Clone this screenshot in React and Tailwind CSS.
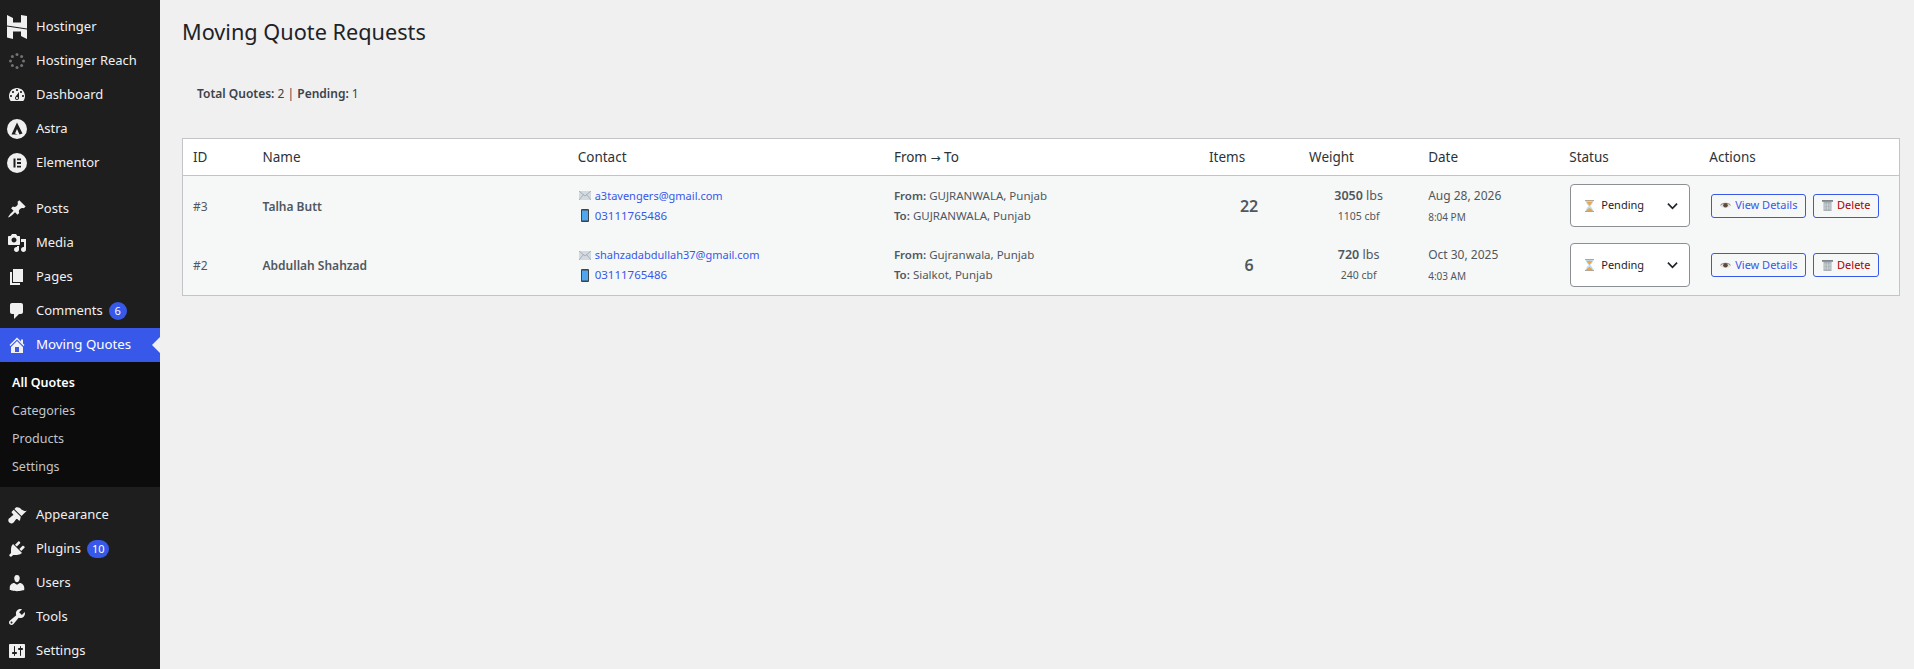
import React from "react";

const FONT = { fontFamily: '"Noto Sans", sans-serif' };

const dash = {
  dashboard:
    "M3.76 16h12.48c1.1-1.37 1.76-3.11 1.76-5 0-4.42-3.58-8-8-8s-8 3.58-8 8c0 1.89.66 3.63 1.76 5zM10 4c.55 0 1 .45 1 1s-.45 1-1 1-1-.45-1-1 .45-1 1-1zM6 6c.55 0 1 .45 1 1s-.45 1-1 1-1-.45-1-1 .45-1 1-1zm8 0c.55 0 1 .45 1 1s-.45 1-1 1-1-.45-1-1 .45-1 1-1zm-5.37 5.55L12 7v6c0 1.1-.9 2-2 2s-2-.9-2-2c0-.57.24-1.08.63-1.45zM4 10c.55 0 1 .45 1 1s-.45 1-1 1-1-.45-1-1 .45-1 1-1zm12 0c.55 0 1 .45 1 1s-.45 1-1 1-1-.45-1-1 .45-1 1-1zm-5 3c0-.55-.45-1-1-1s-1 .45-1 1 .45 1 1 1 1-.45 1-1z",
  post: "M10.44 3.02l1.82-1.82 6.36 6.35-1.83 1.82c-1.05-.68-2.48-.57-3.41.36l-.75.75c-.92.93-1.04 2.35-.35 3.41l-1.83 1.82-2.41-2.41-2.8 2.79c-.42.42-3.38 2.71-3.8 2.29s1.86-3.39 2.28-3.81l2.79-2.79L4.1 9.36l1.83-1.82c1.05.69 2.48.57 3.4-.36l.75-.75c.93-.92 1.05-2.35.36-3.41z",
  media:
    "M13 11V4c0-.55-.45-1-1-1h-1.67L9 1H5L3.67 3H2c-.55 0-1 .45-1 1v7c0 .55.45 1 1 1h10c.55 0 1-.45 1-1zM7 4.5c1.38 0 2.5 1.12 2.5 2.5S8.38 9.5 7 9.5 4.5 8.38 4.5 7 5.62 4.5 7 4.5zM14 6h5v10.5c0 1.38-1.12 2.5-2.5 2.5S14 17.88 14 16.5s1.12-2.5 2.5-2.5c.17 0 .34.02.5.05V9h-3V6zm-4 8.05V13h2v3.5c0 1.38-1.12 2.5-2.5 2.5S7 17.88 7 16.5 8.12 14 9.5 14c.17 0 .34.02.5.05z",
  page: "M6 15V2h10v13H6zm-1 1h8v2H3V5h2v11z",
  comments:
    "M5 2h9c1.1 0 2 .9 2 2v7c0 1.1-.9 2-2 2h-2l-5 5v-5H5c-1.1 0-2-.9-2-2V4c0-1.1.9-2 2-2z",
  home: "M16 8.5l1.53 1.53-1.06 1.06L10 4.62l-6.47 6.47-1.06-1.06L10 2.5l4 4v-2h2v4zm-6-2.46l6 5.99V18H4v-5.97zM12 17v-5H8v5h4z",
  appearance:
    "M14.48 11.06L7.41 3.99l1.5-1.5c.5-.56 2.3-.47 3.51.32 1.21.8 1.43 1.28 2.91 2.1 1.18.64 2.45 1.26 4.45.85zm-.71.71L6.7 4.7 4.93 6.47c-.39.39-.39 1.02 0 1.41l1.06 1.06c.39.39.39 1.03 0 1.42-.6.6-1.43 1.11-2.21 1.69-.35.26-.7.53-1.01.84C1.43 13.23.78 15.24 1.82 17s3.46 1.8 4.77.5c.31-.31.58-.66.84-1.01.58-.78 1.09-1.61 1.69-2.21.39-.39 1.02-.39 1.41 0l1.06 1.06c.39.39 1.02.39 1.41 0z",
  plugins:
    "M13.11 4.36L9.87 7.6 8 5.73l3.24-3.24c.35-.34 1.05-.2 1.56.32.52.51.66 1.21.31 1.55zm-8 1.77l.91-1.12 9.01 9.01-1.19.84c-.71.71-2.63 1.16-3.82 1.16H6.14L4.9 17.26c-.59.59-1.54.59-2.12 0-.59-.58-.59-1.53 0-2.12l1.24-1.24v-3.88c0-1.13.4-3.19 1.09-3.89zm7.26 3.97l3.24-3.24c.34-.35 1.04-.21 1.55.31.52.51.66 1.21.31 1.55l-3.24 3.25z",
  users:
    "M10 9.25c-2.27 0-2.73-3.44-2.73-3.44C7 4.02 7.82 2 9.97 2c2.16 0 2.98 2.02 2.71 3.81 0 0-.41 3.44-2.68 3.44zm0 2.57L12.72 10c2.39 0 4.52 2.33 4.52 4.53v2.49s-3.65 1.13-7.24 1.13c-3.65 0-7.24-1.13-7.24-1.13v-2.49c0-2.25 1.94-4.48 4.47-4.48z",
  tools:
    "M16.68 9.77c-1.34 1.34-3.3 1.67-4.95.99l-5.41 6.52c-.99.99-2.59.99-3.58 0s-.99-2.59 0-3.57l6.52-5.42c-.68-1.65-.35-3.61.99-4.95 1.28-1.28 3.12-1.62 4.72-1.06l-2.89 2.89 2.82 2.82 2.86-2.87c.53 1.58.18 3.39-1.08 4.65zM3.81 16.21c.4.39 1.04.39 1.43 0 .4-.4.4-1.04 0-1.43-.39-.4-1.03-.4-1.43 0-.39.39-.39 1.03 0 1.43z",
  settings:
    "M18 16V4c0-.55-.45-1-1-1H3c-.55 0-1 .45-1 1v12c0 .55.45 1 1 1h14c.55 0 1-.45 1-1zM8 11h1c.55 0 1 .45 1 1s-.45 1-1 1H8v1.5c0 .28-.22.5-.5.5s-.5-.22-.5-.5V13H6c-.55 0-1-.45-1-1s.45-1 1-1h1V5.5c0-.28.22-.5.5-.5s.5.22.5.5V11zm5-2h-1c-.55 0-1-.45-1-1s.45-1 1-1h1V5.5c0-.28.22-.5.5-.5s.5.22.5.5V7h1c.55 0 1 .45 1 1s-.45 1-1 1h-1v5.5c0 .28-.22.5-.5.5s-.5-.22-.5-.5V9z",
};

const Dash = ({ name }) => (
  <svg viewBox="0 0 20 20" className="w-5 h-5 fill-[#f0f0f1]">
    <path d={dash[name]} />
  </svg>
);

const HostingerLogo = () => (
  <svg viewBox="0 0 20 24" className="w-5 h-6 shrink-0 fill-[#f0f0f1]">
    <path d="M0 0l6 3v4.500h8V0l6 1v12.500L0 10.500zM0 11.500l20 3V24l-6-3v-4.500H6V24l-6-1.500z" />
  </svg>
);

const ReachIcon = () => (
  <svg viewBox="0 0 20 20" className="w-5 h-5 fill-[#6f7276]">
    <circle cx="10" cy="3.500" r="1.500" />
    <circle cx="14.600" cy="5.400" r="1.500" />
    <circle cx="16.500" cy="10" r="1.500" />
    <circle cx="14.600" cy="14.600" r="1.500" />
    <circle cx="10" cy="16.500" r="1.500" />
    <circle cx="5.400" cy="14.600" r="1.500" />
    <circle cx="3.500" cy="10" r="1.500" />
    <circle cx="5.400" cy="5.400" r="1.500" />
  </svg>
);

const AstraIcon = () => (
  <svg viewBox="0 0 20 20" className="w-5 h-5">
    <circle cx="10" cy="10" r="10" fill="#f0f0f1" />
    <path d="M10 3.500l5.500 11-3 1-2.500-5.500-2 4.500 2.500 1H4.500z" fill="#1e1e1e" />
  </svg>
);

const ElementorIcon = () => (
  <svg viewBox="0 0 20 20" className="w-5 h-5">
    <circle cx="10" cy="10" r="10" fill="#f0f0f1" />
    <path d="M6.500 5.500h2v9h-2zM10 5.500h4v1.800h-4zM10 9.100h4v1.800h-4zM10 12.700h4v1.800h-4z" fill="#1e1e1e" />
  </svg>
);

const MailEmoji = () => (
  <svg viewBox="0 0 12 9" className="w-3 h-[9px] shrink-0">
    <rect width="12" height="9" fill="#d3dae0" />
    <path d="M0 0l6 5 6-5M0 9l4.500-5.500M12 9L7.500 3.500" fill="none" stroke="#9aa5ad" strokeWidth="0.8" />
  </svg>
);

const PhoneEmoji = () => (
  <svg viewBox="0 0 8 13" className="w-2 h-[13px] shrink-0">
    <rect width="8" height="13" rx="1" fill="#3e4347" />
    <rect x="1" y="1.500" width="6" height="10" fill="#4fa8ef" />
  </svg>
);

const Hourglass = () => (
  <svg viewBox="0 0 9 12" className="w-[9px] h-3 shrink-0">
    <path d="M1 1h7c0 3-2 4-2.800 5C6 7 8 8 8 11H1c0-3 2-4 2.800-5C3 5 1 4 1 1z" fill="#bfe0f2" />
    <path d="M1.500 2h6L4.500 6zM1.500 11c.5-2 2-2.500 3-3 1 .5 2.500 1 3 3z" fill="#efa64a" />
    <rect width="9" height="1.200" fill="#b3a58f" />
    <rect y="10.800" width="9" height="1.200" fill="#b3a58f" />
  </svg>
);

const EyeEmoji = () => (
  <svg viewBox="0 0 11 7" className="w-[11px] h-[7px] shrink-0">
    <path d="M0 3.500C2 .5 9 .5 11 3.500 9 6.500 2 6.500 0 3.500z" fill="#e3dfda" />
    <circle cx="5.500" cy="3.300" r="2.300" fill="#5b4a3d" />
    <path d="M0 3.500C2 .5 9 .5 11 3.500" fill="none" stroke="#6b5b4d" strokeWidth="0.7" />
  </svg>
);

const TrashEmoji = () => (
  <svg viewBox="0 0 11 11" className="w-[11px] h-[11px] shrink-0">
    <rect x="1.500" y="1.500" width="8" height="9.500" fill="#a9b1b6" />
    <rect width="11" height="1.800" fill="#7f878c" />
    <path d="M3 3v7M5.500 3v7M8 3v7M1.500 5h8M1.500 8h8" stroke="#d5dadd" strokeWidth="0.6" />
  </svg>
);

const Chevron = () => (
  <svg viewBox="0 0 12 8" className="w-[11px] h-2 shrink-0">
    <path d="M1 1.500l5 5 5-5" fill="none" stroke="#1d2327" strokeWidth="1.800" />
  </svg>
);

const MenuItem = ({ icon, label, badge, active }) => (
  <div
    className={`relative flex items-center h-[34px] pl-[7px] text-[13px] ${
      active ? "bg-[#3858e9] text-white" : "text-[#f0f0f1]"
    }`}
  >
    <span className="w-5 h-5 flex items-center justify-center shrink-0">{icon}</span>
    <span className={`ml-[9px] whitespace-nowrap ${active ? "text-[13.3px]" : ""}`}>{label}</span>
    {badge && (
      <span className="ml-[6px] h-[18px] min-w-[18px] px-[5px] rounded-full bg-[#3858e9] text-white text-[11px] flex items-center justify-center">
        {badge}
      </span>
    )}
    {active && (
      <span className="absolute right-0 top-1/2 -translate-y-1/2 w-0 h-0 border-y-[8px] border-y-transparent border-r-[8px] border-r-[#f0f0f1]" />
    )}
  </div>
);

const Sidebar = () => (
  <aside className="w-40 shrink-0 bg-[#1e1e1e] pt-[10px]">
    <MenuItem icon={<HostingerLogo />} label="Hostinger" />
    <MenuItem icon={<ReachIcon />} label="Hostinger Reach" />
    <MenuItem icon={<Dash name="dashboard" />} label="Dashboard" />
    <MenuItem icon={<AstraIcon />} label="Astra" />
    <MenuItem icon={<ElementorIcon />} label="Elementor" />
    <div className="h-3" />
    <MenuItem icon={<Dash name="post" />} label="Posts" />
    <MenuItem icon={<Dash name="media" />} label="Media" />
    <MenuItem icon={<Dash name="page" />} label="Pages" />
    <MenuItem icon={<Dash name="comments" />} label="Comments" badge="6" />
    <MenuItem icon={<Dash name="home" />} label="Moving Quotes" active />
    <div className="bg-[#0c0c0c] pt-[7px] pb-[6px] text-[12.5px]">
      <div className="h-7 pl-3 flex items-center font-semibold text-white">All Quotes</div>
      <div className="h-7 pl-3 flex items-center text-[#c3c4c7]">Categories</div>
      <div className="h-7 pl-3 flex items-center text-[#c3c4c7]">Products</div>
      <div className="h-7 pl-3 flex items-center text-[#c3c4c7]">Settings</div>
    </div>
    <div className="h-[11px]" />
    <MenuItem icon={<Dash name="appearance" />} label="Appearance" />
    <MenuItem icon={<Dash name="plugins" />} label="Plugins" badge="10" />
    <MenuItem icon={<Dash name="users" />} label="Users" />
    <MenuItem icon={<Dash name="tools" />} label="Tools" />
    <MenuItem icon={<Dash name="settings" />} label="Settings" />
  </aside>
);

const quotes = [
  {
    id: "#3",
    name: "Talha Butt",
    email: "a3tavengers@gmail.com",
    phone: "03111765486",
    from: "GUJRANWALA, Punjab",
    to: "GUJRANWALA, Punjab",
    items: 22,
    lbs: 3050,
    cbf: 1105,
    date: "Aug 28, 2026",
    time: "8:04 PM",
  },
  {
    id: "#2",
    name: "Abdullah Shahzad",
    email: "shahzadabdullah37@gmail.com",
    phone: "03111765486",
    from: "Gujranwala, Punjab",
    to: "Sialkot, Punjab",
    items: 6,
    lbs: 720,
    cbf: 240,
    date: "Oct 30, 2025",
    time: "4:03 AM",
  },
];

const fromTo = (
  <>
    From <span className="font-['DejaVu_Sans',sans-serif] text-xs">→</span> To
  </>
);
const headers = ["ID", "Name", "Contact", fromTo, "Items", "Weight", "Date", "Status", "Actions"];
const widths = [70, 315, 316, 315, 100, 119, 141, 140, 200];

const QuoteRow = ({ q, tall }) => (
  <tr className="bg-[#f6f7f7] text-[#50575e] text-xs">
    <td className="px-[10px] pt-[2px] align-middle">{q.id}</td>
    <td className="px-[10px] pt-[2px] align-middle font-semibold">{q.name}</td>
    <td className="px-[10px] pl-[11px] align-middle text-[#3858e9] leading-[20px]">
      <div className="flex items-center gap-[4px] text-[11px]">
        <MailEmoji />
        {q.email}
      </div>
      <div className="flex items-center gap-[6px] pl-[2px] text-[11.5px]">
        <PhoneEmoji />
        {q.phone}
      </div>
    </td>
    <td className="px-[10px] align-middle leading-[20px] text-[11.5px]">
      <div>
        <b className="font-semibold">From:</b> {q.from}
      </div>
      <div>
        <b className="font-semibold">To:</b> {q.to}
      </div>
    </td>
    <td className="px-[10px] align-middle text-center text-base font-semibold">{q.items}</td>
    <td className="px-[10px] align-middle text-center">
      <div className="text-[12.5px] leading-[20px]">
        <b className="font-semibold">{q.lbs}</b> lbs
      </div>
      <div className="text-[10.5px] leading-[20px]">{q.cbf} cbf</div>
    </td>
    <td className="px-[10px] align-middle">
      <div className="leading-[22px]">{q.date}</div>
      <div className="text-[10px] leading-[20px]">{q.time}</div>
    </td>
    <td className="pl-[11px] pr-[9px] py-2 align-middle">
      <div
        className={`w-[120px] flex items-center justify-between pl-[14px] pr-[11px] bg-white border border-[#8c8f94] rounded text-[#1d2327] text-[11px] ${
          tall ? "h-[44px]" : "h-[43px]"
        }`}
      >
        <span className="flex items-center gap-[7px]">
          <Hourglass />
          Pending
        </span>
        <Chevron />
      </div>
    </td>
    <td className="pl-3 pr-2 align-middle text-[11px]">
      <div className="flex gap-[7px]">
        <button className="w-[95px] h-6 flex items-center justify-center gap-[4px] border border-[#3858e9] rounded-[3px] bg-[#f6f7f7] text-[#3858e9]">
          <EyeEmoji />
          View Details
        </button>
        <button className="w-[66px] h-6 flex items-center justify-center gap-[4px] border border-[#3858e9] rounded-[3px] bg-[#f6f7f7] text-[#aa0000]">
          <TrashEmoji />
          Delete
        </button>
      </div>
    </td>
  </tr>
);

export default function App() {
  return (
    <div className="flex h-screen bg-[#f0f0f1] overflow-hidden" style={FONT}>
      <Sidebar />
      <main className="flex-1 min-w-0 pl-[22px] pr-[14px]">
        <h1 className="mt-[17px] text-[21.7px] leading-[30px] font-normal text-[#1d2327]">
          Moving Quote Requests
        </h1>
        <p className="mt-[37px] pl-[15px] text-xs leading-5 text-[#3c434a]">
          <b className="font-semibold">Total Quotes:</b> 2 | <b className="font-semibold">Pending:</b> 1
        </p>
        <table className="mt-[34px] w-full table-fixed border-collapse border border-[#c3c4c7]">
          <colgroup>
            {widths.map((w, i) => (
              <col key={i} width={w} />
            ))}
          </colgroup>
          <thead>
            <tr className="h-[37px] bg-white border-b border-[#c3c4c7]">
              {headers.map((h, i) => (
                <th key={i} className="px-[10px] text-left text-[13.5px] font-normal text-[#2c3338] whitespace-nowrap">
                  {h}
                </th>
              ))}
            </tr>
          </thead>
          <tbody>
            {quotes.map((q, i) => (
              <QuoteRow key={q.id} q={q} tall={i === 1} />
            ))}
          </tbody>
        </table>
      </main>
    </div>
  );
}
